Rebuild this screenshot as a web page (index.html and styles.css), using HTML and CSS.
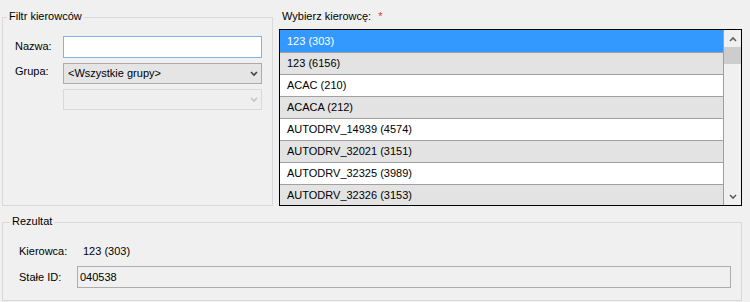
FILE: index.html
```html
<!DOCTYPE html>
<html lang="pl">
<head>
    <meta charset="UTF-8">
    <title>Wybór kierowcy</title>
    <link rel="stylesheet" href="styles.css">
</head>
<body>

<div class="top">

    <!-- filtr po lewej -->
    <div class="group filter">
        <div class="group-title">Filtr kierowców</div>

        <div class="form">
            <label class="lbl lbl-name">Nazwa:</label>
            <input class="text-input focused" type="text">

            <label class="lbl lbl-group">Grupa:</label>
            <div class="combo">
                <span>&lt;Wszystkie grupy&gt;</span>
                <svg width="8" height="6" viewBox="0 0 8 6"><polyline points="1,1 4,4 7,1" fill="none" stroke="#444" stroke-width="1.6"/></svg>
            </div>

            <span></span>
            <div class="combo disabled">
                <span></span>
                <svg width="8" height="6" viewBox="0 0 8 6"><polyline points="1,1 4,4 7,1" fill="none" stroke="#c4c4c4" stroke-width="1.6"/></svg>
            </div>
        </div>
    </div>

    <!-- lista kierowcow -->
    <div class="picker">
        <div class="picker-label">Wybierz kierowcę: <span class="req">*</span></div>

        <div class="listbox">
            <div class="rows">
                <div class="row selected">123 (303)</div>
                <div class="row alt">123 (6156)</div>
                <div class="row">ACAC (210)</div>
                <div class="row alt">ACACA (212)</div>
                <div class="row">AUTODRV_14939 (4574)</div>
                <div class="row alt">AUTODRV_32021 (3151)</div>
                <div class="row">AUTODRV_32325 (3989)</div>
                <div class="row alt">AUTODRV_32326 (3153)</div>
            </div>
            <div class="scrollbar">
                <div class="sb-btn">
                    <svg width="8" height="6" viewBox="0 0 8 6"><polyline points="1,5 4,2 7,5" fill="none" stroke="#606060" stroke-width="1.6"/></svg>
                </div>
                <div class="sb-thumb"></div>
                <div class="sb-track"></div>
                <div class="sb-btn">
                    <svg width="8" height="6" viewBox="0 0 8 6"><polyline points="1,1 4,4 7,1" fill="none" stroke="#606060" stroke-width="1.6"/></svg>
                </div>
            </div>
        </div>
    </div>

</div>

<!-- wynik -->
<div class="group result">
    <div class="group-title">Rezultat</div>

    <div class="result-row driver-row">
        <span class="lbl res-lbl">Kierowca:</span>
        <span class="res-value">123 (303)</span>
    </div>
    <div class="result-row id-row">
        <span class="lbl id-lbl">Stałe ID:</span>
        <input class="text-input readonly" type="text" value="040538" readonly>
    </div>
</div>

</body>
</html>
```

FILE: styles.css
```css
body {
    margin: 0;
    background: #f0f0f0;
    font-family: "Liberation Sans", Arial, sans-serif;
    font-size: 11px;
    line-height: 13px;
    color: #000;
}

.top {
    display: grid;
    grid-template-columns: 271px 463px;
    column-gap: 6px;
    padding: 0 8px 0 2px;
}

.group {
    border: 1px solid #d9d9d9;
    box-sizing: border-box;
}

.group-title {
    width: fit-content;
    margin-top: -8px;
    padding: 0 2px;
    background: #f0f0f0;
}

/* ---- filtr ---- */
.filter {
    margin-top: 17px;
    height: 189px;
}

.filter .group-title {
    margin-left: 4px;
}

.form {
    display: grid;
    grid-template-columns: 48px 199px;
    row-gap: 5px;
    margin-top: 13px;
    padding-left: 12px;
}

.lbl-name {
    margin-top: 4px;
}

.lbl-group {
    margin-top: 2px;
}

.text-input {
    box-sizing: border-box;
    height: 22px;
    margin: 0;
    padding: 0 2px;
    border: 1px solid #abadb3;
    font: inherit;
    outline: none;
}

.focused {
    border-color: #7eb4ea;
    background: #fff;
}

.combo {
    box-sizing: border-box;
    height: 21px;
    display: flex;
    align-items: center;
    justify-content: space-between;
    padding: 0 3px 0 4px;
    border: 1px solid #acacac;
    background: #e5e5e5;
}

.combo.disabled {
    border-color: #d9d9d9;
    background: #efefef;
}

/* ---- lista ---- */
.picker-label {
    padding-top: 10px;
    padding-left: 3px;
    margin-bottom: 6px;
}

.req {
    color: #e8333a;
    margin-left: 4px;
    font-size: 11px;
}

.listbox {
    box-sizing: border-box;
    height: 177px;
    border: 1px solid #000;
    display: grid;
    grid-template-columns: 444px 17px;
    overflow: hidden;
}

.rows {
    overflow: hidden;
}

.row {
    box-sizing: border-box;
    height: 22px;
    line-height: 21px;
    padding-left: 7px;
    border-top: 1px solid #a0a0a0;
    border-right: 1px solid #a0a0a0;
    background: #fff;
    white-space: nowrap;
}

.row.alt {
    background: #e3e3e3;
}

.row.selected {
    background: #3399ff;
    border-top-color: #3399ff;
    color: #fff;
}

.scrollbar {
    display: flex;
    flex-direction: column;
    background: #f0f0f0;
}

.sb-btn {
    height: 17px;
    display: flex;
    align-items: center;
    justify-content: center;
    flex-shrink: 0;
}

.sb-thumb {
    height: 17px;
    background: #cdcdcd;
    flex-shrink: 0;
}

.sb-track {
    flex: 1;
}

/* ---- rezultat ---- */
.result {
    margin: 16px 8px 0 2px;
    height: 79px;
}

.result .group-title {
    margin-left: 7px;
}

.result-row {
    display: flex;
    align-items: center;
    padding: 0 10px 0 16px;
}

.driver-row {
    margin-top: 17px;
}

.res-lbl {
    width: 64px;
}

.id-row {
    margin-top: 8px;
}

.id-lbl {
    width: 58px;
}

.readonly {
    flex: 1;
    background: #f0f0f0;
    border-color: #adadad;
}
```
